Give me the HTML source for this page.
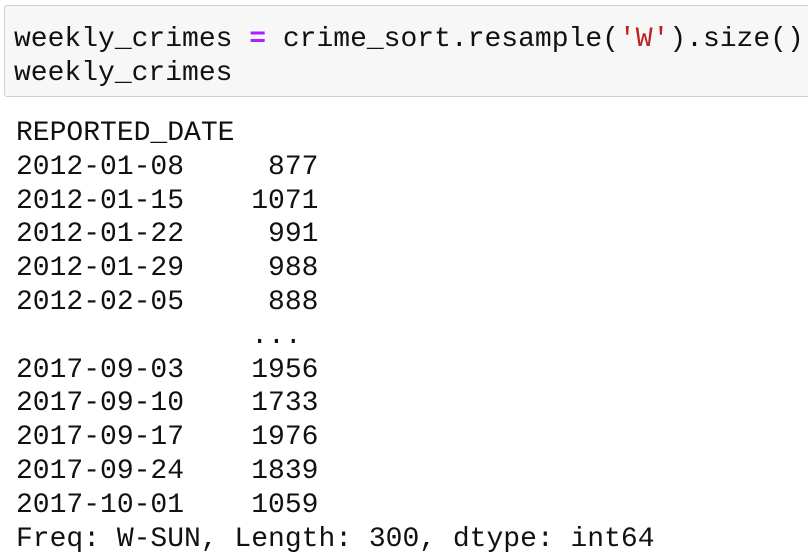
<!DOCTYPE html>
<html><head><meta charset="utf-8"><style>
html,body{margin:0;padding:0;background:#fff;width:808px;height:560px;overflow:hidden}
pre{margin:0;font-family:"Liberation Mono",monospace;font-size:28px;line-height:33.8px;color:#111}
.box{position:absolute;left:4px;top:5px;width:830px;height:90px;border:1px solid #cfcfcf;border-radius:3px;background:#f7f7f7}
.code{position:absolute;left:14px;top:23px}
.out{position:absolute;left:16px;top:117px}
.op{color:#aa22ff;font-weight:bold}
.s{color:#ba2121}
</style></head><body>
<div class="box"></div>
<pre class="code">weekly_crimes <span class="op">=</span> crime_sort.resample(<span class="s">'W'</span>).size()
weekly_crimes</pre>
<pre class="out">REPORTED_DATE
2012-01-08     877
2012-01-15    1071
2012-01-22     991
2012-01-29     988
2012-02-05     888
              ... 
2017-09-03    1956
2017-09-10    1733
2017-09-17    1976
2017-09-24    1839
2017-10-01    1059
Freq: W-SUN, Length: 300, dtype: int64</pre>
</body></html>
